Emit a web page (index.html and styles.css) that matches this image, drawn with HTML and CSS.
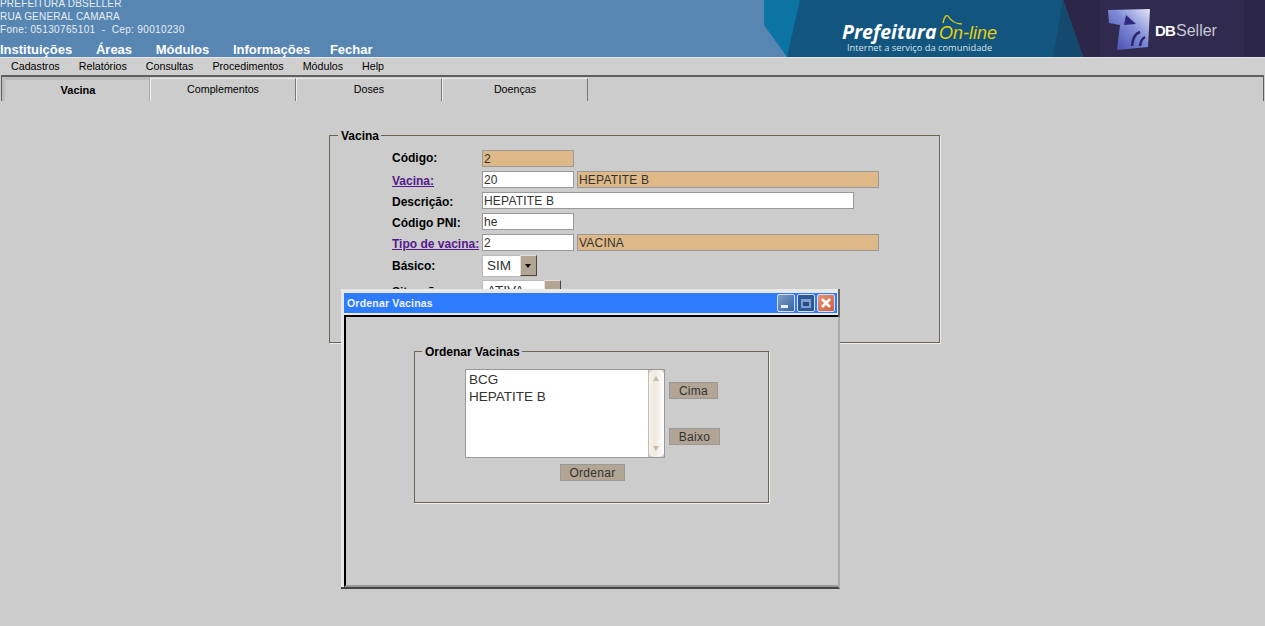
FILE: index.html
```html
<!DOCTYPE html>
<html lang="pt-BR">
<head>
    <meta charset="UTF-8">
    <title>Vacina</title>
    <link rel="stylesheet" href="styles.css">
</head>
<body>
    <header class="topo">
        <div class="topo-info">
            <div class="endereco">
                <div>PREFEITURA DBSELLER</div>
                <div>RUA GENERAL CAMARA</div>
                <div class="endereco-fone">Fone: 05130765101 &nbsp;-&nbsp; Cep: 90010230</div>
            </div>
            <nav class="menu-principal">
                <a>Instituições</a>
                <a>Áreas</a>
                <a>Módulos</a>
                <a>Informações</a>
                <a class="menu-fechar">Fechar</a>
            </nav>
        </div>
        <svg class="banner" width="501" height="57" viewBox="0 0 501 57">
            <defs>
                <linearGradient id="cuboDb" x1="0" y1="1" x2="1" y2="0">
                    <stop offset="0" stop-color="#3f46a8"/>
                    <stop offset="0.55" stop-color="#7f8ad6"/>
                    <stop offset="1" stop-color="#e4e7f6"/>
                </linearGradient>
            </defs>
            <rect width="501" height="57" fill="#5786b3"/>
            <polygon points="0,0 150,0 150,57 23,57 0,25" fill="#0b74a3"/>
            <polygon points="36,0 299,0 319,57 23,57" fill="#12557f"/>
            <polygon points="299,0 501,0 501,57 319,57" fill="#2c2748"/>
            <polygon points="299,0 319,57 289,57" fill="#134a6e"/>
            <rect x="336" y="0" width="144" height="57" fill="#2f2a4e"/>
            <polygon points="344,10 386,9 384,47 353,50 356,25 345,23" fill="url(#cuboDb)"/>
            <polygon points="362,15 372,24 360,25" fill="#2f2a80"/>
            <path d="M368 46 Q369 34 376 32 M376 46 Q377 39 381 37" stroke="#2b2768" stroke-width="2.5" fill="none"/>
            <text x="391" y="36" class="db-forte">DB</text>
            <text x="412" y="36" class="db-fino">Seller</text>
            <text x="78" y="39" class="pref-forte">Prefeitura</text>
            <text x="175" y="39" class="pref-fino">On-line</text>
            <path d="M179 23 Q181 14 184 16 Q189 24 198 24" stroke="#e8cf10" stroke-width="1.3" fill="none"/>
            <text x="83" y="51" class="pref-sub">Internet a serviço da comunidade</text>
        </svg>
    </header>

    <nav class="barra-menu">
        <a>Cadastros</a>
        <a>Relatórios</a>
        <a>Consultas</a>
        <a>Procedimentos</a>
        <a>Módulos</a>
        <a>Help</a>
    </nav>

    <main class="painel">
        <div class="abas">
            <div class="aba ativa">Vacina</div>
            <div class="aba">Complementos</div>
            <div class="aba">Doses</div>
            <div class="aba">Doenças</div>
        </div>

        <fieldset class="quadro quadro-vacina">
            <legend>Vacina</legend>
            <div class="form-grid">
                <label class="primeiro">Código:</label>
                <div class="campos"><span class="campo leitura curto">2</span></div>

                <label><a class="ancora">Vacina:</a></label>
                <div class="campos">
                    <span class="campo curto">20</span>
                    <span class="campo leitura longo">HEPATITE B</span>
                </div>

                <label>Descrição:</label>
                <div class="campos"><span class="campo medio">HEPATITE B</span></div>

                <label>Código PNI:</label>
                <div class="campos"><span class="campo curto">he</span></div>

                <label><a class="ancora">Tipo de vacina:</a></label>
                <div class="campos">
                    <span class="campo curto">2</span>
                    <span class="campo leitura longo">VACINA</span>
                </div>

                <label class="rotulo-select">Básico:</label>
                <div class="campos">
                    <span class="combo combo-sim">SIM<i class="combo-seta"></i></span>
                </div>

                <label class="rotulo-select rotulo-situacao">Situação:</label>
                <div class="campos">
                    <span class="combo combo-ativa">ATIVA<i class="combo-seta"></i></span>
                </div>
            </div>
        </fieldset>
    </main>

    <section class="janela">
        <div class="janela-titulo">
            <span>Ordenar Vacinas</span>
            <div class="janela-botoes">
                <span class="jb jb-min"><i></i></span>
                <span class="jb jb-max"><i></i></span>
                <span class="jb jb-fechar">
                    <svg width="14" height="14" viewBox="0 0 14 14"><path d="M3 3 L11 11 M11 3 L3 11" stroke="#fff" stroke-width="2.6"/></svg>
                </span>
            </div>
        </div>
        <div class="janela-corpo">
            <fieldset class="quadro quadro-ordenar">
                <legend>Ordenar Vacinas</legend>
                <div class="ordenar-linha">
                    <div class="lista">
                        <div class="lista-itens">
                            <div>BCG</div>
                            <div>HEPATITE B</div>
                        </div>
                        <div class="lista-rolagem">
                            <span class="tri-cima"></span>
                            <span class="tri-baixo"></span>
                        </div>
                    </div>
                    <div class="ordenar-botoes">
                        <button class="botao botao-cima">Cima</button>
                        <button class="botao botao-baixo">Baixo</button>
                    </div>
                </div>
                <button class="botao botao-ordenar">Ordenar</button>
            </fieldset>
        </div>
    </section>
</body>
</html>
```
FILE: styles.css
```css
*{
    box-sizing: border-box;
}
html, body{
    margin: 0;
    padding: 0;
    height: 626px;
    overflow: hidden;
}
body{
    background-color: #cccccc;
    font-family: "Liberation Sans", Arial, sans-serif;
    color: #000;
    position: relative;
}

/* topo */
.topo{
    display: flex;
    justify-content: space-between;
    height: 57px;
    background-color: #5786b3;
    overflow: hidden;
}
.topo-info{
    color: #fff;
}
.endereco{
    margin-top: -3px;
    font-size: 10px;
    line-height: 13px;
    letter-spacing: 0.2px;
    color: #e8eef5;
}
.endereco-fone{
    letter-spacing: 0.35px;
}
.menu-principal{
    display: flex;
    gap: 23.7px;
    margin-top: 6px;
    font-size: 13px;
    font-weight: bold;
    line-height: 16px;
}
.menu-fechar{
    margin-left: -4px;
}
.banner{
    display: block;
    flex: none;
}
.pref-forte{
    font: italic bold 19.5px "Open Sans", sans-serif;
    fill: #fff;
}
.pref-fino{
    font: italic 18px "Liberation Sans Narrow", "Liberation Sans", sans-serif;
    fill: #e8cf10;
}
.pref-sub{
    font: 9.3px "Open Sans", sans-serif;
    fill: #d8e2ea;
}
.db-forte{
    font: bold 15px "Liberation Sans", sans-serif;
    letter-spacing: -0.8px;
    fill: #fff;
}
.db-fino{
    font: 16px "Liberation Sans", sans-serif;
    fill: #c9c9d6;
}

/* barra de menu */
.barra-menu{
    display: flex;
    gap: 19px;
    height: 18px;
    padding-left: 11px;
    border-top: 1px solid #e6e6e6;
    font-size: 10.7px;
    line-height: 16px;
    background-color: #cfcfcf;
}

/* abas */
.painel{
    height: 551px;
}
.abas{
    display: flex;
    height: 26px;
    margin: 0 1px 0 1px;
    padding: 1px 0 0 2px;
    border-top: 2px solid #5f5f5f;
    border-left: 1px solid #5f5f5f;
    border-right: 1px solid #5f5f5f;
}
.aba{
    width: 146px;
    padding-top: 4px;
    font-size: 10.7px;
    text-align: center;
    border-top: 1px solid #eee;
    border-right: 1px solid #777;
    border-left: 1px solid #eee;
}
.aba.ativa{
    margin: -1px 0 0 -2px;
    padding-top: 7px;
    padding-left: 5px;
    width: 148px;
    font-size: 11px;
    font-weight: bold;
    border: 0;
    border-right: 1px solid #aaa;
    box-shadow: inset 3px 3px 0 #bdbdbd;
}

/* quadros */
.quadro{
    margin: 0;
    padding: 0;
    border: 1px solid #6b6353;
    box-shadow: 1px 1px 0 #eee;
}
.quadro legend{
    margin-left: 8px;
    padding: 2px 2px 0 3px;
    font-size: 12px;
    font-weight: bold;
    line-height: 13px;
}
.quadro-vacina{
    width: 611px;
    height: 215px;
    margin: 27px 0 0 329px;
}
.form-grid{
    display: grid;
    grid-template-columns: 90px 1fr;
    grid-auto-rows: 21px;
    padding: 7px 0 0 62px;
    font-size: 12px;
    font-weight: bold;
}
.form-grid label{
    padding-top: 2px;
    line-height: 17px;
}
.form-grid .primeiro{
    padding-top: 0;
}
.form-grid .rotulo-select{
    padding-top: 0;
    line-height: 22px;
}
.form-grid .rotulo-situacao{
    padding-top: 5px;
}
.ancora{
    color: #551a8b;
    text-decoration: underline;
}
.campos{
    display: flex;
    gap: 3px;
}
.campo{
    display: block;
    height: 17px;
    padding-left: 1px;
    border: 1px solid #999;
    background-color: #fff;
    color: #333;
    font-size: 12px;
    font-weight: normal;
    line-height: 17px;
    letter-spacing: 0.2px;
    white-space: nowrap;
}
.campo.leitura{
    background-color: #deb887;
}
.curto{
    width: 92px;
}
.medio{
    width: 372px;
}
.longo{
    width: 302px;
}
.combo{
    display: block;
    position: relative;
    height: 22px;
    padding-left: 4px;
    background-color: #fff;
    border: 1px solid #bbb;
    font-size: 13.5px;
    font-weight: normal;
    line-height: 19px;
    color: #333;
}
.combo-sim{
    width: 55px;
}
.combo-ativa{
    width: 79px;
    margin-top: 4px;
}
.combo-seta{
    position: absolute;
    right: -1px;
    top: -1px;
    width: 17px;
    height: 21px;
    background-color: #b2a593;
    border: 1px solid;
    border-color: #e5dfd6 #4c463c #4c463c #e5dfd6;
}
.combo-seta::after{
    content: "";
    position: absolute;
    left: 4px;
    top: 8px;
    border: 3px solid transparent;
    border-top: 4px solid #000;
    border-bottom: 0;
}

/* janela */
.janela{
    position: absolute;
    left: 341px;
    top: 289px;
    width: 499px;
    height: 300px;
    padding: 4px 0 0 3px;
    background-color: #e8e8e8;
    border-right: 2px solid #aaa;
    border-bottom: 2px solid #444;
}
.janela::after{
    content: "";
    position: absolute;
    top: 0;
    right: -2px;
    width: 2px;
    height: 28px;
    background-color: #666;
}
.janela-titulo{
    display: flex;
    justify-content: space-between;
    align-items: center;
    height: 20px;
    margin-right: 1px;
    padding: 0 2px 0 3px;
    background-color: #2f7bff;
    color: #eef4ff;
    font-size: 10.5px;
    font-weight: bold;
    letter-spacing: 0.2px;
}
.janela-botoes{
    display: flex;
    gap: 2px;
}
.jb{
    display: flex;
    align-items: center;
    justify-content: center;
    position: relative;
    width: 18px;
    height: 18px;
    border: 1px solid #cfe0ff;
    border-radius: 2px;
}
.jb-min{
    background: linear-gradient(135deg, #7d9dc8, #3763a3);
}
.jb-min i{
    position: absolute;
    left: 3px;
    bottom: 3px;
    width: 7px;
    height: 3px;
    background-color: #e8eef8;
}
.jb-max{
    background-color: #2f5796;
}
.jb-max i{
    width: 10px;
    height: 9px;
    border: 2px solid #7f9fd0;
    border-top-width: 3px;
    background-color: #244a86;
}
.jb-fechar{
    background: linear-gradient(135deg, #e89272, #cf5f3f);
}
.janela-corpo{
    height: 272px;
    margin-top: 2px;
    padding: 27px 0 0 68px;
    background-color: #cccccc;
    border-top: 2px solid #000;
    border-left: 2px solid #000;
    border-bottom: 2px solid #999;
}
.quadro-ordenar{
    position: relative;
    width: 355px;
    height: 159px;
}
.quadro-ordenar legend{
    margin-left: 7px;
}
.ordenar-linha{
    display: flex;
    gap: 4px;
    margin: 10px 0 0 50px;
}
.lista{
    display: flex;
    width: 200px;
    height: 89px;
    background-color: #fff;
    border: 1px solid #999;
}
.lista-itens{
    flex: 1;
    padding: 1px 0 0 3px;
    font-size: 13.5px;
    line-height: 17px;
    color: #333;
}
.lista-rolagem{
    position: relative;
    width: 16px;
    background: #cccccc;
    border-left: 1px solid #c9bda9;
}
.lista-rolagem::before{
    content: "";
    position: absolute;
    inset: 0;
    background: linear-gradient(to right, #f7f3ec 0, #efe9df 40%, #fff 100%);
    border-radius: 5px;
}
.tri-cima, .tri-baixo{
    position: absolute;
    z-index: 1;
    left: 4px;
    border: 3px solid transparent;
}
.tri-cima{
    top: 6px;
    border-bottom: 5px solid #c4baa8;
    border-top: 0;
}
.tri-baixo{
    bottom: 6px;
    border-top: 5px solid #c4baa8;
    border-bottom: 0;
}
.ordenar-botoes{
    display: flex;
    flex-direction: column;
    align-items: flex-start;
    gap: 29px;
    padding-top: 13px;
}
.botao{
    display: block;
    height: 17px;
    padding: 1px 0 0;
    background-color: #b2a593;
    border: 1px solid #999;
    font-family: "Liberation Sans", Arial, sans-serif;
    font-size: 12px;
    line-height: 15px;
    letter-spacing: 0.3px;
    color: #333;
}
.botao-cima{
    width: 49px;
}
.botao-baixo{
    width: 51px;
}
.botao-ordenar{
    width: 65px;
    margin: 6px 0 0 145px;
}
```
